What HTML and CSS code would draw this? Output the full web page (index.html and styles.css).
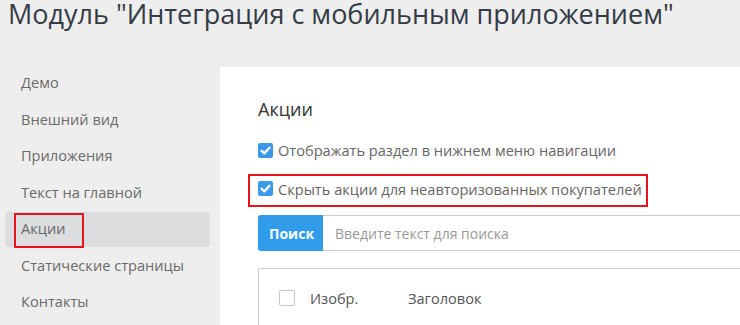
FILE: index.html
```html
<!DOCTYPE html>
<html lang="ru">
<head>
<meta charset="utf-8">
<title>Модуль</title>
<link rel="stylesheet" href="styles.css">
</head>
<body>
<h1 class="title">Модуль "Интеграция с мобильным приложением"</h1>
<div class="layout">
  <nav class="sidebar">
    <a class="nav-item">Демо</a>
    <a class="nav-item">Внешний вид</a>
    <a class="nav-item">Приложения</a>
    <a class="nav-item">Текст на главной</a>
    <a class="nav-item active">Акции</a>
    <a class="nav-item">Статические страницы</a>
    <a class="nav-item">Контакты</a>
  </nav>
  <main class="panel">
    <h2 class="panel-title">Акции</h2>
    <label class="check-row">
      <span class="cb checked"><svg viewBox="0 0 15 15" width="15" height="15"><path d="M3.5 7.7 L6.3 10.4 L11.5 4.8" fill="none" stroke="#fff" stroke-width="2.3" stroke-linecap="round" stroke-linejoin="round"/></svg></span>
      <span>Отображать раздел в нижнем меню навигации</span>
    </label>
    <label class="check-row highlighted">
      <span class="cb checked"><svg viewBox="0 0 15 15" width="15" height="15"><path d="M3.5 7.7 L6.3 10.4 L11.5 4.8" fill="none" stroke="#fff" stroke-width="2.3" stroke-linecap="round" stroke-linejoin="round"/></svg></span>
      <span>Скрыть акции для неавторизованных покупателей</span>
    </label>
    <div class="search">
      <button class="search-btn">Поиск</button>
      <div class="search-input">Введите текст для поиска</div>
    </div>
    <div class="table">
      <div class="table-head">
        <span class="cb empty"></span>
        <span class="col-img">Изобр.</span>
        <span class="col-title">Заголовок</span>
      </div>
    </div>
  </main>
</div>
</body>
</html>
```
FILE: styles.css
```css
html, body {
  margin: 0;
  padding: 0;
  background: #eeeeee;
  font-family: "Open Sans", "Noto Sans", sans-serif;
  overflow: hidden;
  height: 325px;
}
.title {
  margin: -4px 0 0;
  padding: 0 0 0 8px;
  font-size: 27px;
  line-height: 36px;
  font-weight: 400;
  color: #333c46;
  height: 70px;
}
.layout {
  display: flex;
  align-items: flex-start;
}
.sidebar {
  width: 220px;
  flex: none;
  display: flex;
  flex-direction: column;
}
.nav-item {
  position: relative;
  display: flex;
  align-items: center;
  height: 32px;
  padding-bottom: 3px;
  margin: 0 10px 1.5px 5px;
  padding-left: 16px;
  font-size: 14.6px;
  color: #6a6a6a;
  border-radius: 4px;
}
.nav-item.active {
  background: #dcdddf;
}
.nav-item.active::after {
  content: "";
  position: absolute;
  left: 9px;
  top: 1px;
  width: 66px;
  height: 31px;
  border: 2px solid #e8141c;
}
.panel {
  flex: 1;
  margin-top: 1px;
  background: #fff;
  padding: 30px 0 0 38px;
  height: 300px;
  margin-right: -4px;
}
.panel-title {
  margin: 0 0 19px;
  font-size: 18px;
  line-height: 24px;
  font-weight: 400;
  color: #333;
}
.check-row {
  position: relative;
  display: flex;
  align-items: center;
  gap: 5px;
  height: 22px;
  font-size: 14.6px;
  color: #666;
  margin-bottom: 16.5px;
}
.check-row:first-of-type {
  margin-top: -1px;
}
.check-row.highlighted::after {
  content: "";
  position: absolute;
  left: -10px;
  top: -3.5px;
  width: 396px;
  height: 29px;
  border: 2px solid #e8141c;
}
.cb {
  width: 15px;
  height: 15px;
  border-radius: 2px;
  flex: none;
  display: flex;
}
.cb.checked {
  background: #3b99e8;
}
.cb.empty {
  width: 14px;
  height: 14px;
  border: 1px solid #c8c8c8;
  background: #fff;
}
.search {
  display: flex;
  height: 36px;
  margin-top: -1px;
}
.search-btn {
  border: none;
  background: #2f9be9;
  color: #fff;
  font-family: "Open Sans", "Noto Sans", sans-serif;
  font-weight: 700;
  font-size: 14px;
  padding: 0 11px;
  width: 65px;
  border-radius: 3px 0 0 3px;
}
.search-input {
  flex: 1;
  border: 1px solid #cccccc;
  border-left: none;
  display: flex;
  align-items: center;
  padding-left: 12px;
  font-size: 14px;
  color: #999;
}
.table {
  margin-top: 17px;
  border: 1px solid #cccccc;
  height: 80px;
}
.table-head {
  display: flex;
  align-items: center;
  height: 58px;
  padding-left: 20px;
  font-size: 14.6px;
  color: #555;
}
.col-img {
  margin-left: 15px;
  width: 98px;
}
```
